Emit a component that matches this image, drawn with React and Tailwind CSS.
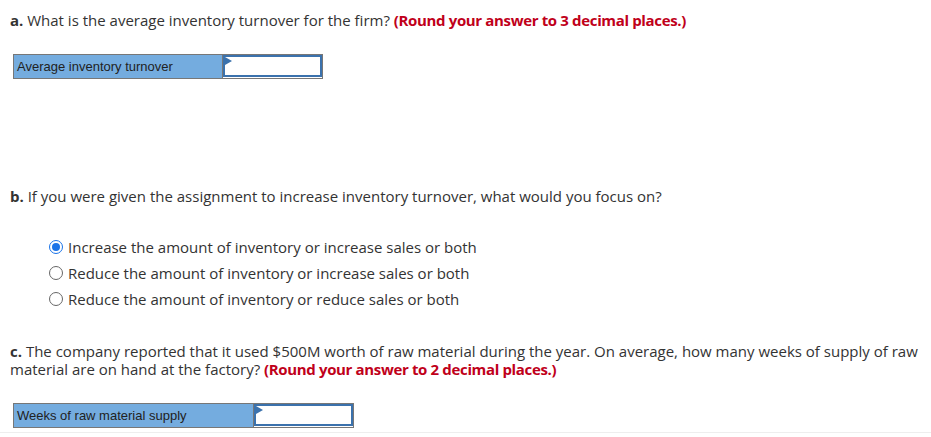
import React, { useState } from 'react';

const font = { fontFamily: '"Open Sans", "Liberation Sans", sans-serif' };

const AnswerRow = ({ label, labelWidth }) => (
    <table className="border-collapse border border-[#777] ml-[13px]">
        <tbody>
            <tr>
                <td className={`${labelWidth} h-[24px] bg-[#74acdf] border border-[#777] px-[3px] text-[13px] text-[#222] font-['Liberation_Sans',sans-serif] leading-none align-middle`}>
                    {label}
                </td>
                <td className="p-0 border border-[#777] align-top">
                    <div className="relative w-[99px] h-[22px] border-2 border-[#3b72ad] bg-white">
                        <span className="absolute left-0 top-0 w-0 h-0 border-t-[4px] border-b-[4px] border-l-[7px] border-t-transparent border-b-transparent border-l-[#3b72ad]"></span>
                    </div>
                </td>
            </tr>
        </tbody>
    </table>
);

const options = [
    'Increase the amount of inventory or increase sales or both',
    'Reduce the amount of inventory or increase sales or both',
    'Reduce the amount of inventory or reduce sales or both'
];

const App = () => {
    const [choice, setChoice] = useState(0);

    return (
        <div className="w-[931px] h-[437px] bg-white text-[#333] overflow-hidden" style={font}>
            <div className="border-b border-[#eee] pb-[4px]">
                {/* Part a */}
                <p className="pl-[10px] pt-[10px] text-[15px] leading-[20px]">
                    <b>a.</b> What is the average inventory turnover for the firm?{' '}
                    <b className="text-[#c0001a] tracking-[-0.35px]">(Round your answer to 3 decimal places.)</b>
                </p>
                <div className="mt-[24px]">
                    <AnswerRow label="Average inventory turnover" labelWidth="w-[209px]" />
                </div>

                {/* Part b */}
                <p className="pl-[10px] mt-[107px] text-[15px] leading-[20px]">
                    <b>b.</b> If you were given the assignment to increase inventory turnover, what would you focus on?
                </p>
                <div className="mt-[31px] ml-[49px] flex flex-col gap-[6px]">
                    {options.map((opt, i) => (
                        <label key={i} className="flex items-center gap-[5px] h-[20px] text-[15px] cursor-pointer">
                            <span
                                onClick={() => setChoice(i)}
                                className={`w-[14px] h-[14px] rounded-full border ${choice === i ? 'border-[#1a73e8] border-[1.5px]' : 'border-[#666]'} flex items-center justify-center bg-white`}
                            >
                                {choice === i && <span className="w-[8px] h-[8px] rounded-full bg-[#1a73e8]"></span>}
                            </span>
                            {opt}
                        </label>
                    ))}
                </div>

                {/* Part c */}
                <p className="pl-[10px] pr-[10px] mt-[33px] text-[15px] leading-[18px]">
                    <b>c.</b> The company reported that it used $500M worth of raw material during the year. On average, how many weeks of supply of raw material are on hand at the factory?{' '}
                    <b className="text-[#c0001a] tracking-[-0.35px]">(Round your answer to 2 decimal places.)</b>
                </p>
                <div className="mt-[25px]">
                    <AnswerRow label="Weeks of raw material supply" labelWidth="w-[240px]" />
                </div>
            </div>
        </div>
    );
};

export default App;
